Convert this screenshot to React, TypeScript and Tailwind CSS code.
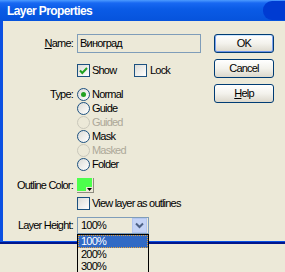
import React from "react";

const font = "font-['Liberation_Sans',Arial,sans-serif]";

function Check({ checked }: { checked?: boolean }) {
  return (
    <span className="w-[13px] h-[13px] shrink-0 border border-[#1C5180] bg-linear-to-br from-[#DCDCD7] to-white flex items-center justify-center">
      {checked && (
        <svg width="11" height="11" viewBox="0 0 11 11">
          <path d="M2 5.5 L4.3 8 L9 3" fill="none" stroke="#21A121" strokeWidth="2" />
        </svg>
      )}
    </span>
  );
}

function Radio({ label, selected, disabled }: { label: string; selected?: boolean; disabled?: boolean }) {
  return (
    <div className="h-[14px] flex items-center gap-[2px]">
      <span
        className={`w-[13px] h-[13px] rounded-full border flex items-center justify-center ${
          disabled ? "border-[#CAC8BB] bg-[#ECE9D8]" : "border-[#1C5180] bg-linear-to-br from-[#DCDCD7] to-white"
        }`}
      >
        {selected && <span className="w-[5px] h-[5px] rounded-full bg-[#21A121]" />}
      </span>
      <span className={disabled ? "text-[#ACA899]" : ""}>{label}</span>
    </div>
  );
}

function Btn({ children, main }: { children: React.ReactNode; main?: boolean }) {
  return (
    <div
      className={`w-[60px] h-[19px] rounded-[3px] border border-[#003C74] bg-linear-to-b from-white via-[#F3F2EC] to-[#DCD8CC] flex items-center justify-center ${
        main ? "shadow-[inset_1px_0_0_#7EA3EF,inset_-1px_0_0_#7EA3EF,inset_0_1px_0_#CEE7FF,inset_0_-1px_0_#6B93E8]" : ""
      }`}
    >
      {children}
    </div>
  );
}

function Label({ children }: { children: React.ReactNode }) {
  return <div className="w-[74px] shrink-0 text-right pr-[4px] whitespace-nowrap">{children}</div>;
}

export default function App() {
  return (
    <div className={`relative w-[285px] h-[272px] overflow-hidden bg-[#ECE9D8] text-[11px] leading-none tracking-[-0.8px] text-black ${font}`}>
      <div className="h-[21px] flex justify-between bg-[linear-gradient(to_bottom,#4C9BFF_0px,#1868F2_3px,#0A5BE6_9px,#0653DC_21px)]">
        <span className="pl-[7px] pt-[5px] text-white font-bold text-[12px] tracking-[-0.6px]">Layer Properties</span>
        <span className="w-[22px] h-[19px] mt-[1px] rounded-l-[9px] bg-[#003BD2]" />
      </div>
      <div className="border-b-2 border-[#00168C]">
        <div className="h-[221px] border-l-[3px] border-b border-[#0B50E2] flex">
          <div className="w-[211px] flex flex-col">
            <div className="mt-[13px] h-[19px] flex items-center">
              <Label>
                <span className="underline">N</span>ame:
              </Label>
              <div className="w-[124px] h-[19px] border border-[#7F9DB9] flex items-center pl-[2px]">Виноград</div>
            </div>
            <div className="mt-[11px] h-[13px] flex items-center pl-[74px]">
              <div className="w-[57px] flex items-center gap-[2px]">
                <Check checked />
                <span>Show</span>
              </div>
              <div className="flex items-center gap-[3px]">
                <Check />
                <span>Lock</span>
              </div>
            </div>
            <div className="mt-[10px] flex">
              <Label>
                <div className="h-[14px] flex items-center justify-end">Type:</div>
              </Label>
              <div className="flex flex-col">
                <Radio label="Normal" selected />
                <Radio label="Guide" />
                <Radio label="Guided" disabled />
                <Radio label="Mask" />
                <Radio label="Masked" disabled />
                <Radio label="Folder" />
              </div>
            </div>
            <div className="mt-[7px] h-[15px] flex items-center">
              <Label>Outline Color:</Label>
              <div className="relative w-[17px] h-[15px] border-r border-b border-[#8E8C80]">
                <div className="w-[15px] h-[13px] bg-[#4CFF4C]" />
                <div className="absolute right-[1px] bottom-[1px] w-[6px] h-[4px] bg-[#ECE9D8] flex items-center justify-center">
                  <svg width="5" height="3" viewBox="0 0 5 3">
                    <path d="M0 0 H5 L2.5 3 Z" fill="#000" />
                  </svg>
                </div>
              </div>
            </div>
            <div className="mt-[4px] h-[13px] flex items-center pl-[74px] gap-[2px]">
              <Check />
              <span>View layer as outlines</span>
            </div>
            <div className="mt-[7px] h-[17px] flex items-center">
              <Label>Layer Height:</Label>
              <div className="w-[72px] h-[17px] border border-[#7F9DB9] flex items-center justify-between pl-[3px] pr-px">
                <span>100%</span>
                <div className="w-[15px] h-[15px] bg-[#C4D3F6] border border-[#B3C6F0] flex items-center justify-center">
                  <svg width="9" height="7" viewBox="0 0 9 7">
                    <path d="M1 1.5 L4.5 5 L8 1.5" fill="none" stroke="#4D6185" strokeWidth="2" />
                  </svg>
                </div>
              </div>
            </div>
          </div>
          <div className="flex flex-col gap-[6px] pt-[13px]">
            <Btn main>OK</Btn>
            <Btn>Cancel</Btn>
            <Btn>
              <span>
                <span className="underline">H</span>elp
              </span>
            </Btn>
          </div>
        </div>
      </div>
      <div className="absolute left-[77px] top-[234px] w-[72px] h-[40px] border border-black bg-[#ECE9D8] flex flex-col">
        <div className="h-[13px] bg-[#316AC5] text-white border border-dotted border-[#E0A040] flex items-center pl-[2px]">100%</div>
        <div className="h-[12px] flex items-center pl-[3px]">200%</div>
        <div className="h-[12px] flex items-center pl-[3px]">300%</div>
      </div>
    </div>
  );
}
